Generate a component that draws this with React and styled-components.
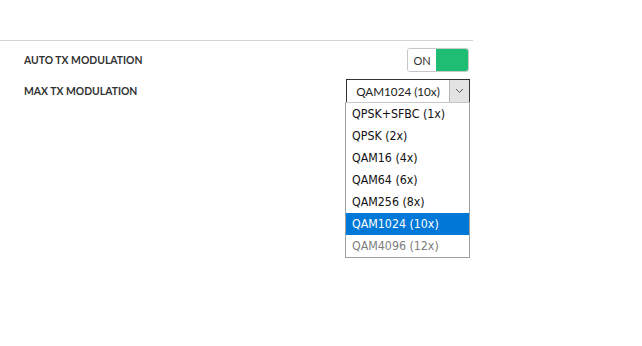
import React from 'react';
import styled, { createGlobalStyle } from 'styled-components';

/**Style */

const GlobalStyle = createGlobalStyle`
html, body {
    margin: 0;
    background: #ffffff;
    font-family: Lato, "Open Sans", sans-serif;
}
#root {
    min-height: 100vh;
}
`

const StylePage = styled.div`
min-height: 346px;
padding-top: 40px;
box-sizing: border-box;
`

const StylePanel = styled.div`
width: 473px;
border-top: 1px solid #d4d4d4;
padding-top: 7px;
display: flex;
flex-direction: column;
gap: 7px;
`

const StyleRow = styled.div`
display: flex;
align-items: center;
justify-content: space-between;
padding-left: 24px;
padding-right: 4px;
height: 24px;
`

const StyleLabel = styled.span`
font-size: 10.4px;
font-weight: 700;
color: #333333;
`

const StyleToggle = styled.div`
display: flex;
width: 62px;
height: 24px;
box-sizing: border-box;
border: 1px solid #c8c8c8;
border-radius: 3px;
overflow: hidden;
`

const StyleToggleText = styled.span`
flex: 1;
display: flex;
align-items: center;
justify-content: center;
font-size: 11px;
color: #333333;
background: #ffffff;
`

const StyleToggleKnob = styled.span`
width: 32px;
background: #1ebd71;
`

const StyleSelectWrap = styled.div`
position: relative;
margin-right: -1px;
`

const StyleSelect = styled.div`
display: flex;
width: 124px;
height: 24px;
box-sizing: border-box;
border: 1px solid #333333;
background: #ffffff;
`

const StyleSelectValue = styled.span`
flex: 1;
display: flex;
align-items: center;
justify-content: center;
font-size: 11.7px;
color: #222222;
`

const StyleArrow = styled.span`
width: 19px;
display: flex;
align-items: center;
justify-content: center;
background: #e3e3e3;
border-left: 1px solid #b5b5b5;
`

const StyleList = styled.div`
position: absolute;
top: 23px;
left: -1px;
z-index: 5;
width: 125px;
box-sizing: border-box;
border: 1px solid #a0a0a0;
border-top-color: #c8c8c8;
background: #ffffff;
`

const StyleOption = styled.div`
height: 22px;
line-height: 23px;
padding-left: 6px;
font-family: "DejaVu Sans Condensed", "DejaVu Sans", Tahoma, sans-serif;
font-stretch: condensed;
font-size: 12.3px;
color: ${(props) => (props.$muted ? '#7d7d7d' : props.$active ? '#ffffff' : '#111111')};
background: ${(props) => (props.$active ? '#0078d7' : 'transparent')};
white-space: nowrap;
`
/****/

const options = [
    'QPSK+SFBC (1x)',
    'QPSK (2x)',
    'QAM16 (4x)',
    'QAM64 (6x)',
    'QAM256 (8x)',
    'QAM1024 (10x)',
    'QAM4096 (12x)',
]

export default function App() {
    return (
        <StylePage>
            <GlobalStyle />
            <StylePanel>
                <StyleRow>
                    <StyleLabel>AUTO TX MODULATION</StyleLabel>
                    <StyleToggle>
                        <StyleToggleText>ON</StyleToggleText>
                        <StyleToggleKnob />
                    </StyleToggle>
                </StyleRow>
                <StyleRow>
                    <StyleLabel>MAX TX MODULATION</StyleLabel>
                    <StyleSelectWrap>
                        <StyleSelect>
                            <StyleSelectValue>QAM1024 (10x)</StyleSelectValue>
                            <StyleArrow>
                                <svg width="9" height="6" viewBox="0 0 9 6">
                                    <path d="M1 1 L4.5 4.5 L8 1" fill="none" stroke="#555" strokeWidth="1" />
                                </svg>
                            </StyleArrow>
                        </StyleSelect>
                        <StyleList>
                            {options.map((opt, i) => (
                                <StyleOption key={opt} $active={i === 5} $muted={i === 6}>
                                    {opt}
                                </StyleOption>
                            ))}
                        </StyleList>
                    </StyleSelectWrap>
                </StyleRow>
            </StylePanel>
        </StylePage>
    );
}
